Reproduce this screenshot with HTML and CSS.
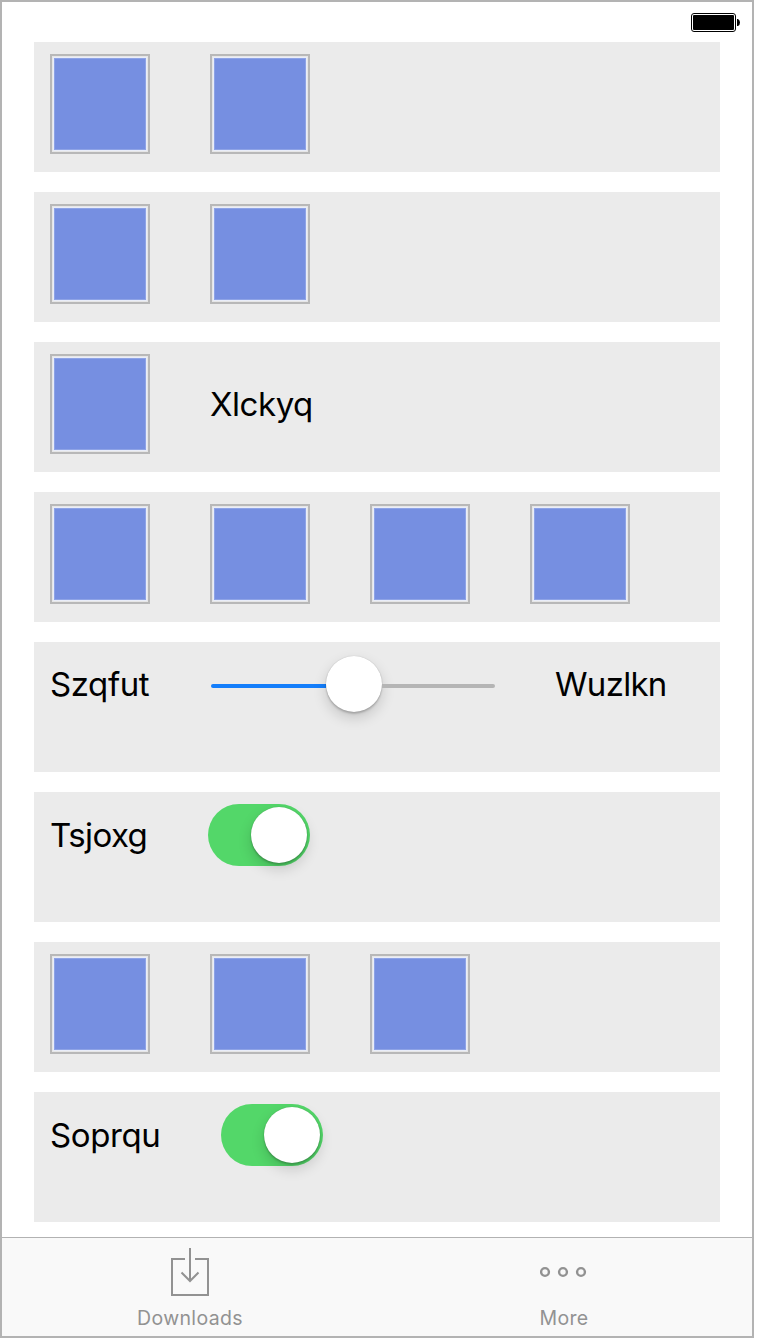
FILE: index.html
```html
<!DOCTYPE html>
<html lang="en">
<head>
<meta charset="utf-8">
<title>Downloads</title>
<link rel="stylesheet" href="styles.css">
</head>
<body>
<div class="phone">
  <header class="status">
    <svg class="battery" width="50" height="20" viewBox="0 0 50 20">
      <rect x="0.5" y="0.5" width="44" height="18" rx="2.5" fill="#fff" stroke="#000"/>
      <rect x="2" y="2" width="41" height="15" rx="1" fill="#000"/>
      <path d="M46 6h1q2 1 2 3.500t-2 3.500h-1z" fill="#000"/>
    </svg>
  </header>
  <main class="rows">
    <section class="row"><i class="tile"></i><i class="tile"></i></section>
    <section class="row"><i class="tile"></i><i class="tile"></i></section>
    <section class="row"><i class="tile"></i><span class="label label-tile">Xlckyq</span></section>
    <section class="row"><i class="tile"></i><i class="tile"></i><i class="tile"></i><i class="tile"></i></section>
    <section class="row">
      <span class="label label-min">Szqfut</span>
      <div class="slider"><i class="fill"></i><i class="knob"></i><i class="rest"></i></div>
      <span class="label label-max">Wuzlkn</span>
    </section>
    <section class="row">
      <span class="label label-first">Tsjoxg</span>
      <div class="switch"><i class="knob"></i></div>
    </section>
    <section class="row"><i class="tile"></i><i class="tile"></i><i class="tile"></i></section>
    <section class="row">
      <span class="label label-second">Soprqu</span>
      <div class="switch"><i class="knob"></i></div>
    </section>
  </main>
  <nav class="tabs">
    <a class="tab">
      <svg width="40" height="50" viewBox="0 0 40 50" fill="none" stroke="#929292" stroke-width="2">
        <path d="M15 12H2v36h36V12H25M20 1v33M11.500 25.500l8.500 8.500 8.500-8.500"/>
      </svg>
      <span class="caption">Downloads</span>
    </a>
    <a class="tab">
      <svg width="48" height="50" viewBox="0 0 48 50" fill="none" stroke="#929292" stroke-width="2.4">
        <circle cx="5" cy="25" r="3.900"/><circle cx="23" cy="25" r="3.900"/><circle cx="41" cy="25" r="3.900"/>
      </svg>
      <span class="caption">More</span>
    </a>
  </nav>
</div>
</body>
</html>
```
FILE: styles.css
```css
body {
  margin: 0;
  background: #fff;
  font-family: Inter, "Liberation Sans", sans-serif;
}
.phone {
  box-sizing: border-box;
  width: 754px;
  height: 1338px;
  border: 2px solid #b3b3b3;
  display: flex;
  flex-direction: column;
}
.status {
  height: 40px;
  display: flex;
  justify-content: flex-end;
  box-sizing: border-box;
  padding: 11px 11px 0 0;
}
.rows {
  flex: 1;
  display: flex;
  flex-direction: column;
  gap: 20px;
  padding: 0 32px;
}
.row {
  box-sizing: border-box;
  height: 130px;
  padding: 12px 16px;
  background: #ebebeb;
  display: flex;
}
.tile {
  box-sizing: border-box;
  width: 100px;
  height: 100px;
  margin-right: 60px;
  border: 2px solid #b8b8b8;
  padding: 2px;
  background: #768fe1 content-box;
  box-shadow: inset 0 0 0 1px #e6e6e6, inset 0 0 0 2px #e9edf9, inset 0 0 0 3px #8ea3e6;
}
.label {
  font-size: 33px;
  line-height: 62px;
  height: 62px;
  color: #000;
  white-space: nowrap;
}
.label-tile { margin-top: 19px; letter-spacing: -0.45px; }
.label-min { width: 161px; letter-spacing: -0.4px; margin-top: -1px; }
.label-max { margin-left: 60px; letter-spacing: -0.7px; margin-top: -1px; }
.label-first { width: 158px; letter-spacing: -0.6px; }
.label-second { width: 171px; letter-spacing: -0.4px; }
.slider {
  width: 284px;
  height: 64px;
  display: flex;
  align-items: center;
}
.fill, .rest {
  flex: 1;
  height: 4px;
  background: #b5b5b5;
  border-radius: 0 2px 2px 0;
}
.fill {
  flex: 0 0 115px;
  background: #147efb;
  border-radius: 2px 0 0 2px;
}
.knob {
  flex: none;
  width: 56px;
  height: 56px;
  border-radius: 50%;
  background: #fff;
  box-shadow: 0 0 1px rgba(0, 0, 0, 0.25), 0 2px 2px rgba(0, 0, 0, 0.18), 0 6px 14px rgba(0, 0, 0, 0.16);
}
.slider .knob { margin-bottom: 4px; }
.switch {
  box-sizing: border-box;
  width: 102px;
  height: 62px;
  padding: 3px;
  border-radius: 31px;
  background: #53d769;
  display: flex;
  justify-content: flex-end;
}
.tabs {
  box-sizing: border-box;
  height: 99px;
  border-top: 1px solid #b2b2b2;
  background: #f9f9f9;
  display: flex;
  justify-content: space-between;
  padding: 9px 1px 0;
}
.tab {
  width: 374px;
  display: flex;
  flex-direction: column;
  align-items: center;
}
.caption {
  margin-top: 9px;
  font-size: 19.5px;
  line-height: 24px;
  letter-spacing: 0.35px;
  color: #929292;
}
```
